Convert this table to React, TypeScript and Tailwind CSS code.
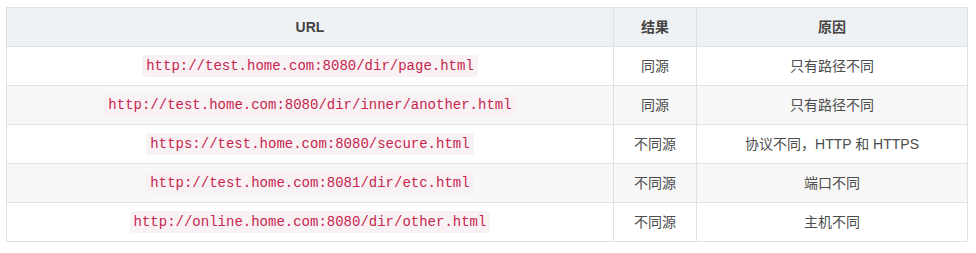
import React from "react";

const rows = [
  ["http://test.home.com:8080/dir/page.html", "同源", "只有路径不同"],
  ["http://test.home.com:8080/dir/inner/another.html", "同源", "只有路径不同"],
  ["https://test.home.com:8080/secure.html", "不同源", "协议不同，HTTP 和 HTTPS"],
  ["http://test.home.com:8081/dir/etc.html", "不同源", "端口不同"],
  ["http://online.home.com:8080/dir/other.html", "不同源", "主机不同"],
];

export default function App() {
  return (
    <div className="w-[976px] h-[253px] bg-white pt-[7px] pl-[6px]" style={{ fontFamily: '"Liberation Sans", Arial, "Noto Sans CJK SC", sans-serif' }}>
      <table className="border-collapse w-[961px] table-fixed text-[14px] text-[#4d4d4d]">
        <colgroup>
          <col className="w-[607px]" />
          <col className="w-[83px]" />
          <col className="w-[271px]" />
        </colgroup>
        <thead>
          <tr className="h-[39px] bg-[#eff2f5] text-[#444]">
            <th className="border border-[#dfe2e5] font-bold text-center">URL</th>
            <th className="border border-[#dfe2e5] font-bold text-center">结果</th>
            <th className="border border-[#dfe2e5] font-bold text-center">原因</th>
          </tr>
        </thead>
        <tbody>
          {rows.map((r, i) => (
            <tr key={i} className={`h-[39px] ${i % 2 === 1 ? "bg-[#f7f7f7]" : "bg-white"}`}>
              <td className="border border-[#dfe2e5] text-center">
                <code
                  className="inline-block align-middle px-[4px] h-[22px] leading-[22px] rounded-[3px] bg-[#f9f2f4] text-[#c7254e] text-[14px]"
                  style={{ fontFamily: '"Liberation Mono", "Courier New", monospace' }}
                >
                  {r[0]}
                </code>
              </td>
              <td className="border border-[#dfe2e5] text-center">{r[1]}</td>
              <td className="border border-[#dfe2e5] text-center">{r[2]}</td>
            </tr>
          ))}
        </tbody>
      </table>
    </div>
  );
}
